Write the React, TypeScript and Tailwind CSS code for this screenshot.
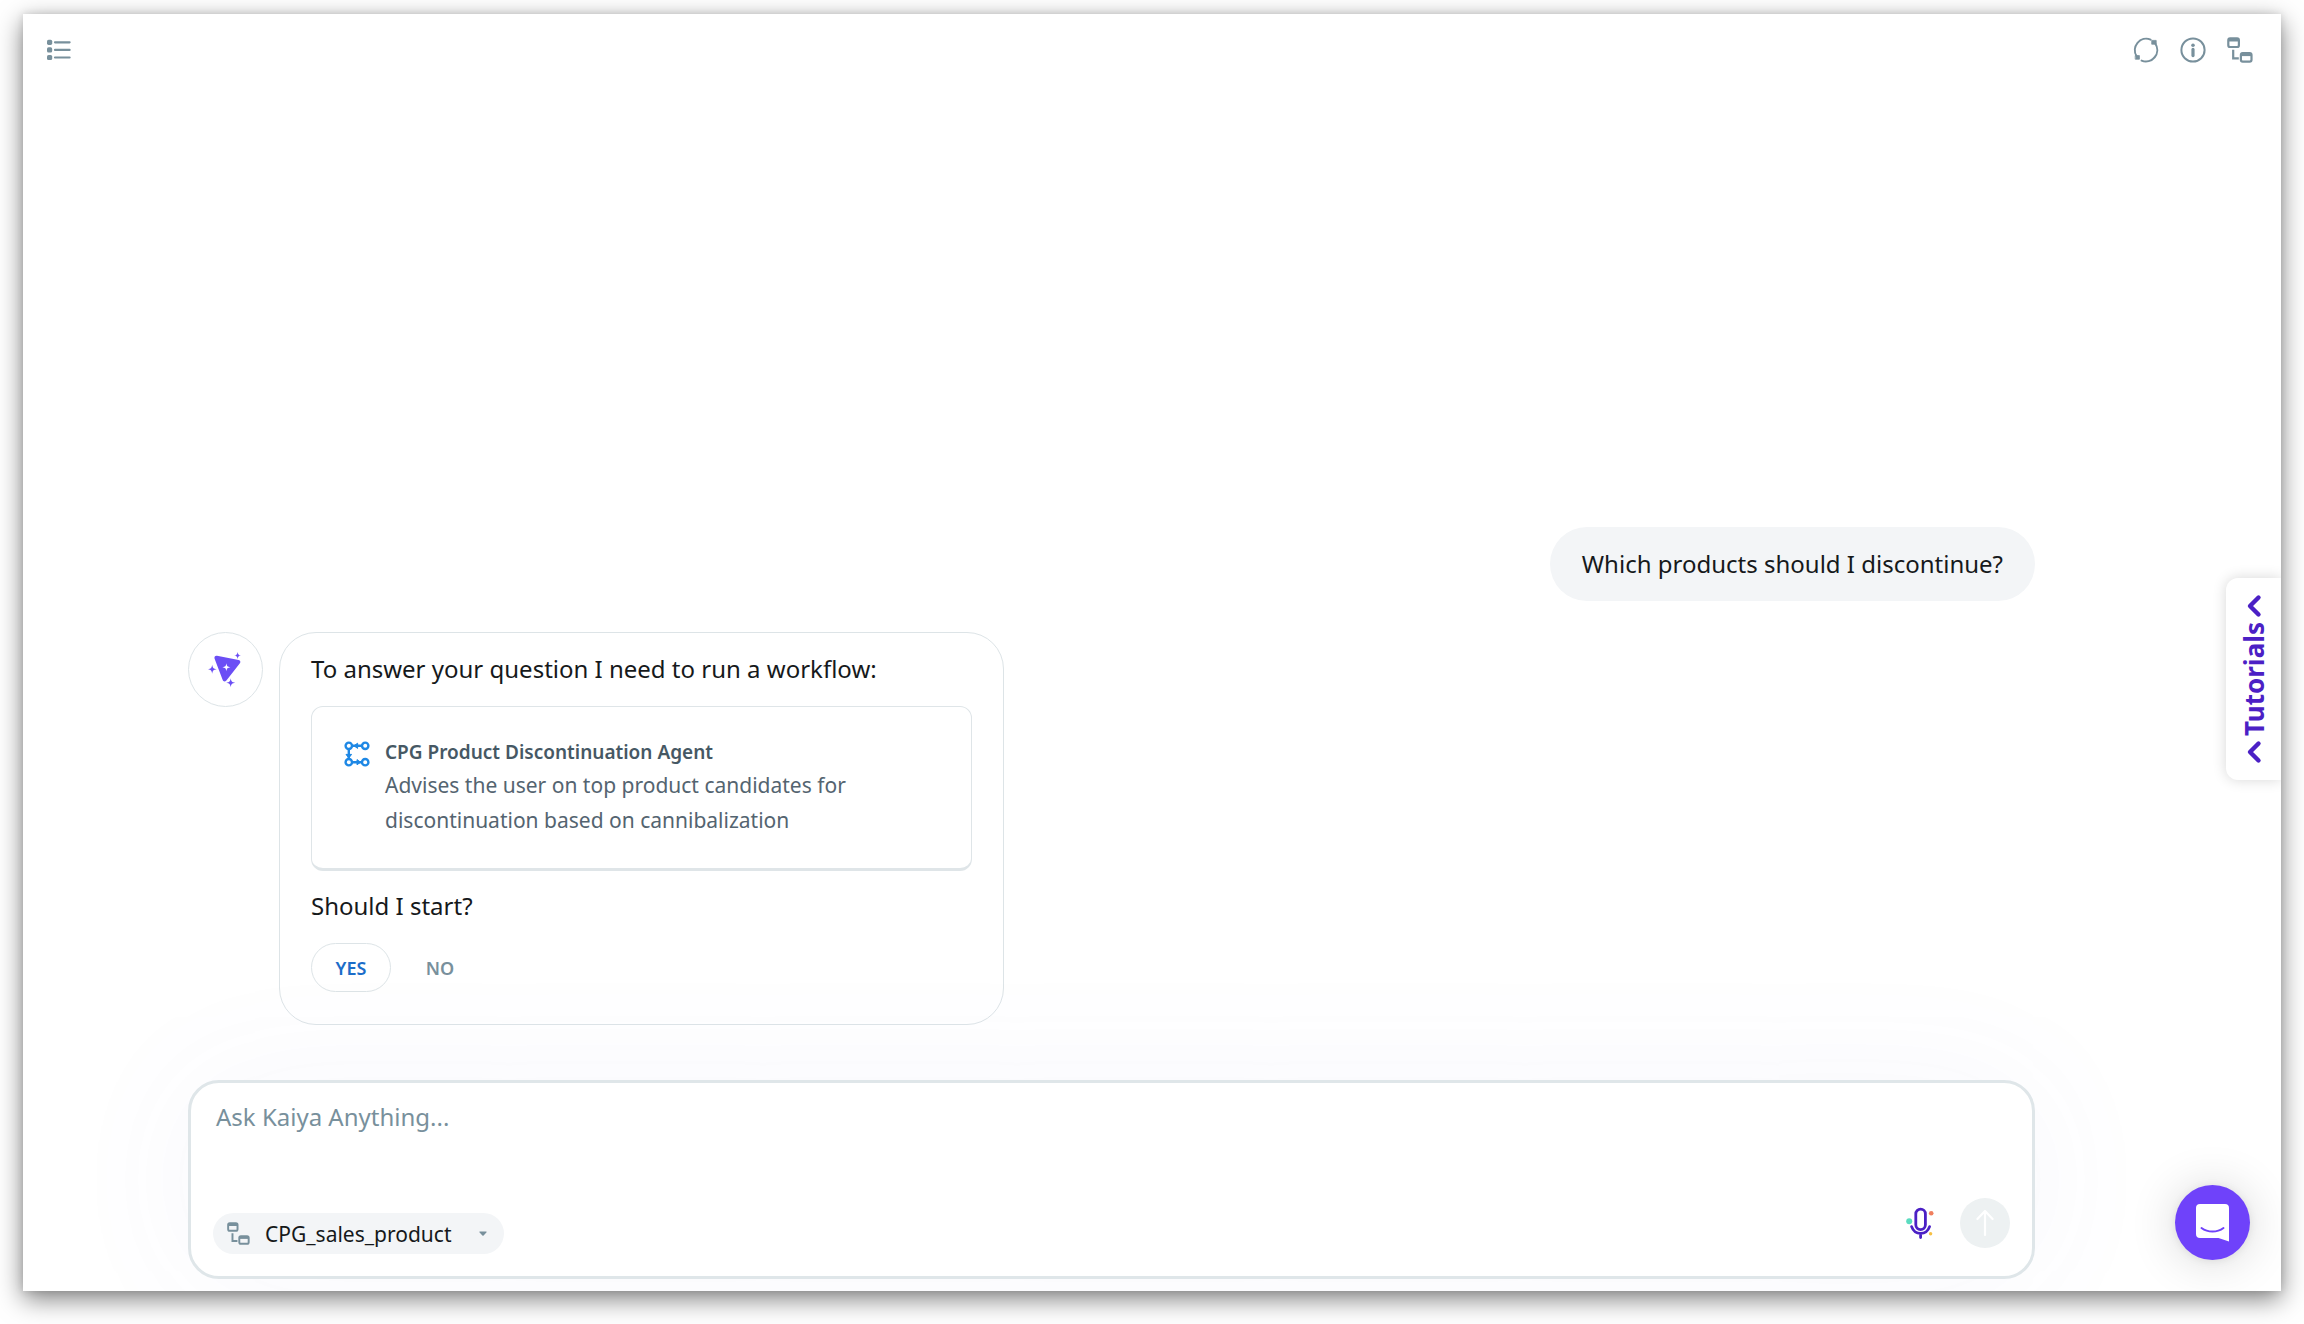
import React, { useState } from 'react';

const ListIcon = () => (
  <svg className="h-6 w-6" viewBox="0 0 24 24" fill="none" stroke="#78909c" aria-hidden="true">
    <g fill="#78909c" stroke="none">
      <rect x="0" y="1.7" width="5.2" height="5.2" rx="1.6" />
      <rect x="0" y="9.3" width="5.2" height="5.2" rx="1.6" />
      <rect x="0" y="16.9" width="5.2" height="5.2" rx="1.6" />
    </g>
    <path d="M8 4.3h14.6M8 11.9h14.6M8 19.5h14.6" strokeWidth="2.2" strokeLinecap="round" />
  </svg>
);

const RefreshIcon = () => (
  <svg className="h-[26px] w-[26px]" viewBox="0 0 26 26" fill="none" stroke="#78909c" strokeWidth="2" strokeLinecap="round" aria-hidden="true">
    <path d="M3.6 19.2A11.4 11.4 0 0 1 17.6 2.6" />
    <path d="M22.4 6.8A11.4 11.4 0 0 1 8.6 23.6" />
    <path d="M19 3.4h4.2v3.8h-4.2zM2.6 18.6h3.8v3.6h-3.8z" fill="#78909c" strokeWidth="0.8" strokeLinejoin="round" />
  </svg>
);

const InfoIcon = () => (
  <svg className="h-[26px] w-[26px]" viewBox="0 0 26 26" fill="none" stroke="#78909c" aria-hidden="true">
    <circle cx="13" cy="13" r="11.6" strokeWidth="2" />
    <circle cx="13" cy="8.2" r="1.8" fill="#78909c" stroke="none" />
    <path d="M13 12.4v6.2" strokeWidth="3.2" strokeLinecap="round" />
  </svg>
);

const DatasetIcon = ({ className }: { className: string }) => (
  <svg className={className} viewBox="0 0 26 26" fill="none" stroke="#78909c" strokeWidth="2.2" aria-hidden="true">
    <rect x="1.3" y="1.4" width="10.6" height="8.6" rx="1.8" />
    <path d="M1.5 2.9h10.2" strokeWidth="3.2" />
    <rect x="13.9" y="16" width="10.6" height="8.6" rx="1.8" />
    <path d="M14.1 17.5h10.2" strokeWidth="3.2" />
    <path d="M6.2 12.8v8.6h5.6" />
  </svg>
);

const KaiyaLogo = () => (
  <svg className="h-9 w-9" viewBox="0 0 36 36" fill="#6b4ef5" aria-hidden="true">
    <path d="M9 3.7 30.6 8c1.9.4 2.3 2.3 1.1 3.6L18.4 28.5c-1.4 1.6-3.2 1.2-3.8-.7L6.6 6.7C6 4.8 7.2 3.4 9 3.7z" />
    <path d="M18.4 11.3c.5 2.9 1.1 3.5 4 4-2.9.5-3.5 1.1-4 4-.5-2.9-1.1-3.5-4-4 2.9-.5 3.5-1.1 4-4z" fill="#fff" />
    <path d="M29.6 0c.4 2.6.9 3.1 3.4 3.5-2.5.4-3 .9-3.4 3.5-.4-2.6-.9-3.1-3.4-3.5 2.5-.4 3-.9 3.4-3.5z" />
    <path d="M4.2 12.7c.6 3.4 1.2 4 4.5 4.5-3.3.5-3.9 1.1-4.5 4.5-.6-3.4-1.2-4-4.5-4.5 3.3-.5 3.9-1.1 4.5-4.5z" />
    <path d="M22.7 26.2c.6 3.4 1.2 4 4.5 4.5-3.3.5-3.9 1.1-4.5 4.5-.6-3.4-1.2-4-4.5-4.5 3.3-.5 3.9-1.1 4.5-4.5z" />
  </svg>
);

const WorkflowIcon = () => (
  <svg className="h-[26px] w-[26px] shrink-0" viewBox="0 0 26 26" fill="none" stroke="#1e88e5" strokeWidth="2.4" aria-hidden="true">
    <circle cx="4.8" cy="4.8" r="3.2" />
    <circle cx="21.2" cy="4.8" r="3.2" />
    <circle cx="4.8" cy="21.2" r="3.2" />
    <circle cx="21.2" cy="21.2" r="3.2" />
    <path d="M8.2 4.8h9.6M4.8 8.2v9.6M8.2 21.2h9.6" />
    <path d="M10 4.8l3.6-2.6v5.2zM4.8 17l-2.8-3.6h5.6zM16.6 21.2l-3.6-2.6v5.2z" fill="#1e88e5" strokeWidth="1" strokeLinejoin="round" />
  </svg>
);

const MicIcon = () => (
  <svg className="h-8 w-7" viewBox="0 0 28 32" fill="none" stroke="#4b20c5" strokeWidth="2.8" strokeLinecap="round" aria-hidden="true">
    <rect x="9.8" y="2.2" width="9.6" height="20.4" rx="4.8" />
    <path d="M5.6 19.6c1.6 4.5 5 6.8 9 6.8s7.4-2.3 9-6.8M14.6 26.6v4" />
    <circle cx="3.2" cy="14.2" r="3" fill="#5bdcc0" stroke="none" />
    <circle cx="25.2" cy="6.2" r="2.3" fill="#f07f5e" stroke="none" />
    <circle cx="24.6" cy="26.8" r="1.7" fill="#f7c045" stroke="none" />
  </svg>
);

const ArrowUpIcon = () => (
  <svg className="h-7 w-7" viewBox="0 0 28 28" fill="none" stroke="#fff" strokeWidth="2.2" strokeLinecap="round" strokeLinejoin="round" aria-hidden="true">
    <path d="M14 26V2M6.4 10 14 2l7.6 8" />
  </svg>
);

const MessengerIcon = () => (
  <svg className="h-10 w-9" viewBox="0 0 36 40" aria-hidden="true">
    <path d="M5 1h25a4 4 0 0 1 4 4v33.5L23.5 35H5a4 4 0 0 1-4-4V5a4 4 0 0 1 4-4z" fill="#fff" />
    <path d="M6.5 25c6.5 4.8 15.5 4.8 22 0" fill="none" stroke="#6f42fa" strokeWidth="2" strokeLinecap="round" />
  </svg>
);

const ChevronIcon = () => (
  <svg className="h-6 w-4" viewBox="0 0 16 24" fill="none" stroke="#4b20c5" strokeWidth="4.4" strokeLinecap="round" strokeLinejoin="round" aria-hidden="true">
    <path d="M12.5 3.5 4 12l8.5 8.5" />
  </svg>
);

const App = () => {
  const [question, setQuestion] = useState('');

  return (
    <div className="flex min-h-screen flex-col bg-white px-[23px] pt-3.5 pb-[33px] font-['Noto_Sans',sans-serif] text-2xl text-[#16191b]">
      <div className="relative flex flex-1 flex-col overflow-hidden bg-white shadow-[0_8px_24px_rgba(0,0,0,0.5),0_0_8px_rgba(0,0,0,0.12)]">
        {/* Top bar */}
        <header className="flex items-center justify-between pt-[23px] pr-7 pl-6">
          <button type="button" aria-label="Chat history">
            <ListIcon />
          </button>
          <div className="flex items-center gap-[21px]">
            <button type="button" aria-label="New chat">
              <RefreshIcon />
            </button>
            <button type="button" aria-label="Info">
              <InfoIcon />
            </button>
            <button type="button" aria-label="Dataset">
              <DatasetIcon className="h-[26px] w-[26px]" />
            </button>
          </div>
        </header>

        <main className="flex flex-1 flex-col justify-end pr-[246px] pb-3 pl-[165px]">
          {/* Conversation */}
          <div className="flex justify-end">
            <p className="rounded-full bg-[#f3f5f7] px-8 py-[19px] leading-9">Which products should I discontinue?</p>
          </div>

          <div className="mt-[31px] flex items-start gap-4">
            <div className="flex h-[75px] w-[75px] shrink-0 items-center justify-center rounded-full border border-[#dde4e7]">
              <KaiyaLogo />
            </div>
            <div className="w-[725px] rounded-[37px] border border-[#dde4e7] px-[31px] pt-[18px] pb-8">
              <p className="leading-9">To answer your question I need to run a workflow:</p>
              <div className="mt-[19px] flex items-start gap-[15px] rounded-xl border border-b-3 border-[#dfe5e8] px-8 pt-[29px] pb-[30px]">
                <div className="pt-[5px]">
                  <WorkflowIcon />
                </div>
                <div className="pr-16 text-[21px] leading-[35px] text-[#546470]">
                  <h2 className="text-[19px] leading-8 font-semibold text-[#465864]">CPG Product Discontinuation Agent</h2>
                  <p>Advises the user on top product candidates for discontinuation based on cannibalization</p>
                </div>
              </div>
              <p className="mt-[17px] leading-9">Should I start?</p>
              <div className="mt-[19px] flex gap-3 text-lg font-semibold">
                <button type="button" className="h-[49px] w-20 rounded-full border border-[#dde4e7] text-[#1c6dc9]">
                  YES
                </button>
                <button type="button" className="h-[49px] w-[74px] rounded-full text-[#78909c]">
                  NO
                </button>
              </div>
            </div>
          </div>

          {/* Question box */}
          <form
            className="mt-[55px] rounded-[31px] border-3 border-[#dfe6e9] bg-white px-[22px] pt-4 pb-[22px] shadow-[0_0_140px_rgba(90,90,190,0.05)]"
            onSubmit={(e) => e.preventDefault()}
          >
            <textarea
              className="block h-[99px] w-full resize-none px-[3px] leading-9 outline-none placeholder:text-[#78909c]"
              aria-label="Ask Kaiya"
              placeholder="Ask Kaiya Anything..."
              value={question}
              onChange={(e) => setQuestion(e.target.value)}
            />
            <div className="flex items-end justify-between">
              <label className="flex h-[41px] items-center rounded-full bg-[#f3f5f7] pr-4 pl-3.5">
                <DatasetIcon className="h-[23px] w-[23px]" />
                <select aria-label="Dataset" className="ml-[15px] appearance-none bg-transparent text-[21px] leading-8 outline-none">
                  <option>CPG_sales_product</option>
                </select>
                <svg className="ml-[26px] h-2 w-2.5" viewBox="0 0 10 8" fill="#78909c" aria-hidden="true">
                  <path d="M2 1.5h6c.6 0 .8.6.4 1L5.6 5.4c-.4.4-.8.4-1.2 0L1.6 2.5c-.4-.4-.2-1 .4-1z" />
                </svg>
              </label>
              <div className="flex items-center gap-[26px] pb-1.5">
                <button type="button" aria-label="Voice input">
                  <MicIcon />
                </button>
                <button type="submit" aria-label="Send" className="flex h-[50px] w-[50px] items-center justify-center rounded-full bg-[#edf1f2]">
                  <ArrowUpIcon />
                </button>
              </div>
            </div>
          </form>
        </main>

        <button
          type="button"
          className="absolute top-[564px] right-0 flex w-[55px] flex-col items-center rounded-l-xl bg-white py-4 text-[#4b20c5] shadow-[0_0_14px_rgba(0,0,0,0.16)]"
        >
          <ChevronIcon />
          <span className="rotate-180 px-1 text-[26px] leading-9 font-bold [writing-mode:vertical-rl]">Tutorials</span>
          <ChevronIcon />
        </button>

        <button
          type="button"
          aria-label="Open messenger"
          className="absolute right-[31px] bottom-[31px] flex h-[75px] w-[75px] items-center justify-center rounded-full bg-[#6f42fa] shadow-[0_2px_48px_rgba(0,0,0,0.16),0_1px_8px_rgba(0,0,0,0.08)]"
        >
          <MessengerIcon />
        </button>
      </div>
    </div>
  );
};

export default App;
